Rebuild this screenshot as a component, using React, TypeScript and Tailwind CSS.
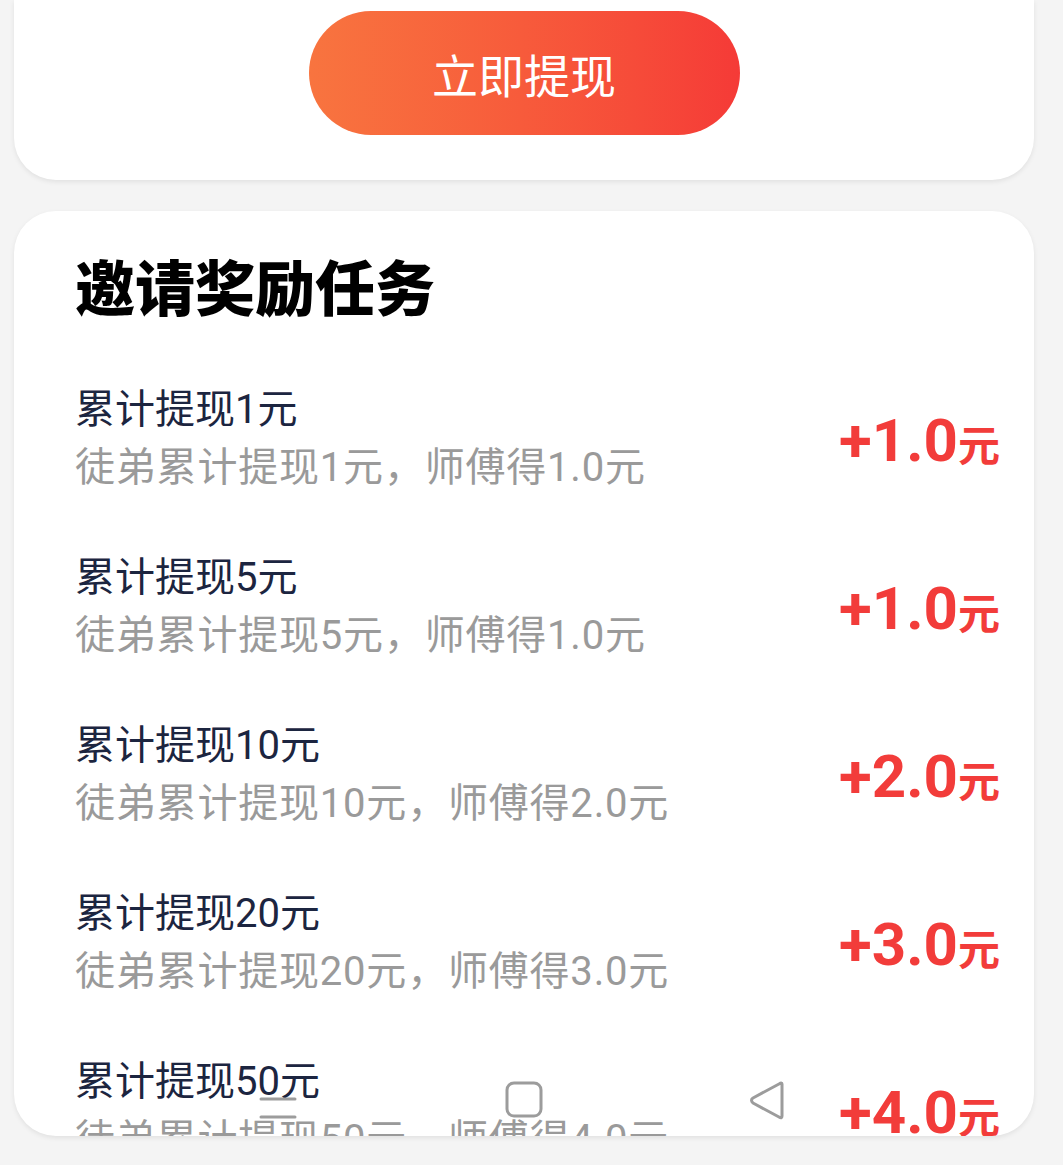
import React from "react";

const rows = [
  { t: "累计提现1元", s: "徒弟累计提现1元，师傅得1.0元", a: "+1.0" },
  { t: "累计提现5元", s: "徒弟累计提现5元，师傅得1.0元", a: "+1.0" },
  { t: "累计提现10元", s: "徒弟累计提现10元，师傅得2.0元", a: "+2.0" },
  { t: "累计提现20元", s: "徒弟累计提现20元，师傅得3.0元", a: "+3.0" },
  { t: "累计提现50元", s: "徒弟累计提现50元，师傅得4.0元", a: "+4.0" },
];

const font = { fontFamily: '"Roboto", "Noto Sans CJK SC", sans-serif' };

export default function App() {
  return (
    <div
      className="relative w-[1063px] h-[1165px] overflow-hidden bg-[#f4f4f4]"
      style={font}
    >
      <div className="ml-[14px] w-[1020px] h-[180px] bg-white rounded-b-[42px] shadow-[0_2px_5px_rgba(0,0,0,0.08)] flex justify-center pt-[11px]">
        <div className="w-[431px] h-[124px] rounded-full bg-gradient-to-r from-[#f8743f] to-[#f53a37] flex items-center justify-center">
          <span className="text-white text-[46px] leading-none font-normal [font-family:'Noto_Sans_CJK_SC',sans-serif]">
            立即提现
          </span>
        </div>
      </div>

      <div className="ml-[14px] mt-[31px] w-[1020px] h-[925px] bg-white rounded-[42px] shadow-[0_2px_5px_rgba(0,0,0,0.08)] overflow-hidden pt-[34px] pl-[61px] pr-[34px]">
        <div className="text-[60px] leading-[80px] font-black text-black [font-family:'Noto_Sans_CJK_SC',sans-serif]">
          邀请奖励任务
        </div>
        <div className="mt-[56px] flex flex-col gap-[52px]">
          {rows.map((r, i) => (
            <div key={i} className="flex items-center justify-between">
              <div className="flex flex-col">
                <div className="text-[40px] leading-[58px] text-[#1c2540]">{r.t}</div>
                <div className="text-[40px] leading-[58px] text-[#9a9a9a] tracking-[0.8px]">{r.s}</div>
              </div>
              <div className="flex items-baseline text-[#f23c3a] font-bold mt-[4px]">
                <span className="text-[60px] leading-none">{r.a}</span>
                <span className="text-[42px] leading-none [font-family:'Noto_Sans_CJK_SC',sans-serif]">元</span>
              </div>
            </div>
          ))}
        </div>
      </div>

      <svg
        className="absolute left-0 top-[1070px]"
        width="1063"
        height="66"
        viewBox="0 1070 1063 66"
        fill="none"
        stroke="#9c9c9c"
        strokeWidth="3"
        strokeLinecap="round"
        strokeLinejoin="round"
      >
        <line x1="261" y1="1099" x2="295" y2="1099" />
        <line x1="261" y1="1117" x2="295" y2="1117" />
        <rect x="507" y="1083" width="34" height="33" rx="7" />
        <path d="M782 1084 L782 1116 Q782 1119 779 1117 L753 1103 Q750 1100 753 1098 L779 1084 Q782 1082 782 1084 Z" />
      </svg>
    </div>
  );
}
